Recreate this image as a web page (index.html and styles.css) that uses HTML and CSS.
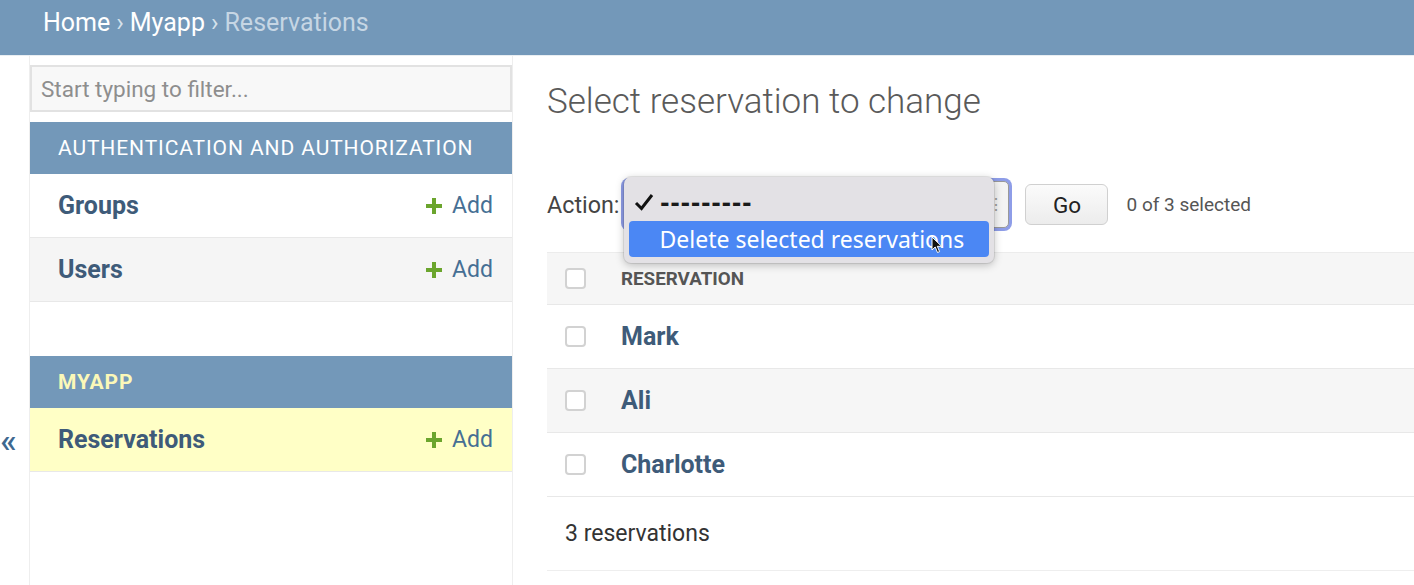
FILE: index.html
```html
<!DOCTYPE html>
<html lang="en">
<head>
<meta charset="utf-8">
<title>Select reservation to change</title>
<link rel="stylesheet" href="styles.css">
</head>
<body>
<header class="breadcrumbs">
  <a class="crumb" href="#">Home</a><span class="sep">›</span><a class="crumb" href="#">Myapp</a><span class="sep">›</span><span class="crumb-current">Reservations</span>
</header>
<div class="main">
  <div class="toggle"><span class="toggle-glyph">«</span></div>
  <nav class="sidebar">
    <input class="filter" type="text" placeholder="Start typing to filter...">
    <div class="module">
      <div class="caption">AUTHENTICATION AND AUTHORIZATION</div>
      <div class="model-row">
        <a class="model-link" href="#">Groups</a>
        <a class="add-link" href="#"><svg class="plus" viewBox="0 0 16 16" width="16" height="16"><path d="M8 1.5v13M1.5 8h13" stroke="#6ba52d" stroke-width="4" stroke-linecap="square"/></svg>Add</a>
      </div>
      <div class="model-row alt">
        <a class="model-link" href="#">Users</a>
        <a class="add-link" href="#"><svg class="plus" viewBox="0 0 16 16" width="16" height="16"><path d="M8 1.5v13M1.5 8h13" stroke="#6ba52d" stroke-width="4" stroke-linecap="square"/></svg>Add</a>
      </div>
    </div>
    <div class="module current-app">
      <div class="caption">MYAPP</div>
      <div class="model-row current">
        <a class="model-link" href="#">Reservations</a>
        <a class="add-link" href="#"><svg class="plus" viewBox="0 0 16 16" width="16" height="16"><path d="M8 1.5v13M1.5 8h13" stroke="#6ba52d" stroke-width="4" stroke-linecap="square"/></svg>Add</a>
      </div>
    </div>
  </nav>
  <div class="content">
    <h1 class="title">Select reservation to change</h1>
    <div class="actions">
      <span class="action-label">Action:</span>
      <div class="select-wrap">
        <div class="select"><span class="select-arrows">⋮</span></div>
        <div class="popup">
          <div class="option checked"><svg class="check" viewBox="0 0 20 18" width="20" height="18"><path d="M2 10 L7.5 15.5 L18 2" fill="none" stroke="#111" stroke-width="3" stroke-linejoin="miter"/></svg><span class="dashes">---------</span></div>
          <div class="option highlighted">Delete selected reservations</div>
        </div>
        <svg class="cursor" viewBox="0 0 12 18" width="12" height="18"><path d="M1 1 L1 14 L4.2 11 L6.5 16.5 L8.6 15.6 L6.3 10.3 L10.6 10.3 Z" fill="#111" stroke="#fff" stroke-width="1"/></svg>
      </div>
      <button class="go" type="button">Go</button>
      <span class="counter">0 of 3 selected</span>
    </div>
    <div class="results">
      <div class="result-row head">
        <span class="cb-cell"><span class="cb"></span></span>
        <span class="col-title">RESERVATION</span>
      </div>
      <div class="result-row">
        <span class="cb-cell"><span class="cb"></span></span>
        <a class="name" href="#">Mark</a>
      </div>
      <div class="result-row alt">
        <span class="cb-cell"><span class="cb"></span></span>
        <a class="name" href="#">Ali</a>
      </div>
      <div class="result-row">
        <span class="cb-cell"><span class="cb"></span></span>
        <a class="name" href="#">Charlotte</a>
      </div>
    </div>
    <p class="paginator">3 reservations</p>
  </div>
</div>
</body>
</html>
```
FILE: styles.css
```css
* { box-sizing: border-box; }
html, body { margin: 0; padding: 0; }
body {
  font-family: Roboto, "Liberation Sans", sans-serif;
  color: #333;
  background: #fff;
  overflow: hidden;
}
a { text-decoration: none; }

/* header / breadcrumbs */
.breadcrumbs {
  height: 56px;
  background: #7398b9;
  padding: 0 43px;
  font-size: 25px;
  line-height: 46px;
  color: #c6d6e4;
  border-bottom: 1px solid #e9eef2;
}
.crumb { color: #fff; }
.sep { color: #d6e2ec; margin: 0 6px; }
.crumb-current { color: #c6d6e4; }

/* main layout */
.main {
  display: flex;
  min-height: 529px;
}
.toggle {
  flex: 0 0 30px;
  border-right: 1px solid #eee;
  display: flex;
  justify-content: center;
  padding-top: 366px;
  padding-right: 12px;
}
.toggle-glyph {
  font-size: 34px;
  line-height: 36px;
  color: #3e6890;
  font-family: Roboto, sans-serif;
  font-weight: 500;
}
.sidebar {
  flex: 0 0 483px;
  border-right: 1px solid #eee;
  padding-top: 9px;
}
.filter {
  display: block;
  width: 100%;
  height: 47px;
  margin: 0 0 10px 0;
  border: 2px solid #e2e2e2;
  background: #f8f8f8;
  font-family: Roboto, "Liberation Sans", sans-serif;
  font-size: 22.5px;
  padding: 0 9px;
  color: #333;
}
.filter::placeholder { color: #8e8e8e; }

.module { margin-bottom: 54px; }
.caption {
  height: 52px;
  background: #7398b9;
  color: #fff;
  font-size: 21px;
  letter-spacing: 0.9px;
  padding-left: 28px;
  display: flex;
  align-items: center;
}
.current-app .caption {
  color: #fbf8b8;
  font-weight: bold;
}
.model-row {
  height: 64px;
  border-bottom: 1px solid #e8e8e8;
  display: flex;
  align-items: center;
  justify-content: space-between;
  padding: 0 19px 0 28px;
  background: #fff;
}
.model-row.alt { background: #f5f5f5; }
.model-row.current { background: #ffffc6; }
.model-link {
  color: #3e5b79;
  font-weight: bold;
  font-size: 25px;
}
.add-link {
  color: #466f94;
  font-size: 23px;
  display: flex;
  align-items: center;
}
.plus { margin-right: 10px; }

/* content */
.content {
  flex: 1;
  margin-left: 34px;
  min-width: 0;
}
.title {
  margin: 25px 0 0 0;
  font-size: 35px;
  line-height: 42px;
  font-weight: 300;
  color: #5a5a5a;
}
.actions {
  margin-top: 58px;
  height: 47px;
  display: flex;
  align-items: center;
}
.action-label {
  font-size: 23.3px;
  color: #444;
  margin-right: 5px;
}
.select-wrap {
  position: relative;
  width: 385px;
  height: 47px;
}
.select {
  width: 100%;
  height: 100%;
  border: 1px solid #999;
  border-radius: 5px;
  background: #f3f3f3;
  box-shadow: 0 0 0 3px #8e9de8;
  display: flex;
  justify-content: flex-end;
  align-items: center;
  padding-right: 4px;
}
.select-arrows { color: #999; font-size: 16px; }
.popup {
  position: absolute;
  left: 0;
  top: -4px;
  width: 370px;
  height: 86px;
  background: #e3e1e5;
  border-radius: 7px;
  box-shadow: 0 2px 8px rgba(0,0,0,0.25), 0 0 0 1px rgba(0,0,0,0.08);
  padding: 5px 5px;
  font-family: "Noto Sans", Roboto, sans-serif;
}
.option {
  height: 36px;
  display: flex;
  align-items: center;
  font-size: 23px;
  color: #222;
  padding-left: 30px;
  position: relative;
}
.option.checked {
  height: 39px;
  padding-left: 31px;
}
.dashes {
  font-weight: bold;
  font-size: 27px;
  letter-spacing: 1.6px;
  color: #1a1a1a;
}
.check {
  position: absolute;
  left: 5px;
  top: 11px;
}
.option.highlighted {
  background: #4b87f4;
  color: #fff;
  border-radius: 4px;
  height: 36px;
}
.cursor {
  position: absolute;
  left: 307px;
  top: 55px;
}
.go {
  margin-left: 16px;
  width: 83px;
  height: 41px;
  border: 1px solid #d0d0d0;
  border-radius: 6px;
  background: linear-gradient(#fbfbfb, #ececec);
  font-family: Roboto, "Liberation Sans", sans-serif;
  font-size: 22.5px;
  color: #222;
  padding: 0;
}
.counter {
  margin-left: 18px;
  font-size: 19px;
  color: #555;
}

.results { margin-top: 24px; }
.result-row {
  height: 64px;
  border-bottom: 1px solid #e8e8e8;
  display: flex;
  align-items: center;
  background: #fff;
}
.result-row.head {
  height: 53px;
  border-top: 1px solid #ececec;
  background: #f6f6f6;
}
.result-row.alt { background: #f6f6f6; }
.cb-cell {
  width: 74px;
  padding-left: 18px;
  display: flex;
  align-items: center;
}
.cb {
  width: 21px;
  height: 21px;
  border: 2px solid #d2d2d2;
  border-radius: 4px;
  background: #fff;
}
.col-title {
  font-size: 18.8px;
  font-weight: bold;
  color: #555;
}
.name {
  font-size: 25px;
  font-weight: bold;
  color: #3e5b79;
}
.paginator {
  margin: 0;
  height: 74px;
  border-bottom: 1px solid #eee;
  display: flex;
  align-items: center;
  padding-left: 18px;
  font-size: 23px;
  color: #333;
}
```
